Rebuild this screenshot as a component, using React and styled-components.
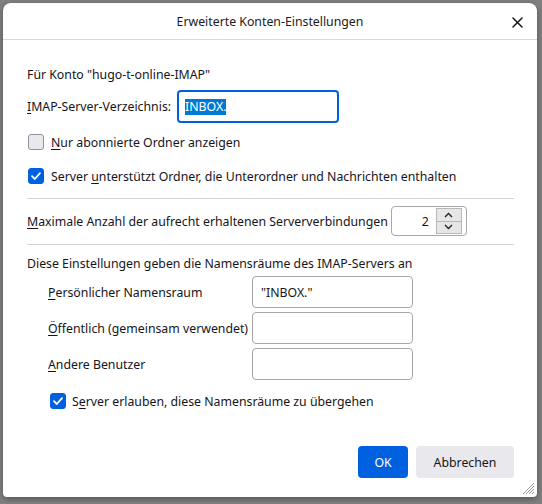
import React from 'react';
import styled, { createGlobalStyle } from 'styled-components';

const GlobalStyle = createGlobalStyle`
  html, body {
    margin: 0;
    padding: 0;
    background: #808080;
    font-family: "Noto Sans", "Open Sans", sans-serif;
  }
  * { box-sizing: border-box; }
`;

const Page = styled.div`
  width: 542px;
  height: 504px;
  padding: 3px 5px 7px 3px;
`;

const Dialog = styled.div`
  position: relative;
  width: 534px;
  height: 494px;
  background: #ffffff;
  border-radius: 8px 8px 4px 4px;
  box-shadow: 0 2px 6px rgba(0, 0, 0, 0.35);
  display: flex;
  flex-direction: column;
  color: #15141a;
  font-size: 12.3px;
`;

const Header = styled.div`
  height: 37px;
  border-bottom: 1px solid #d8d8d8;
  display: flex;
  align-items: center;
  justify-content: center;
  position: relative;
  font-size: 12.3px;
  color: #1b1b1b;
`;

const Close = styled.button`
  position: absolute;
  right: 10px;
  top: 9px;
  width: 20px;
  height: 20px;
  border: 0;
  background: transparent;
  padding: 0;
  display: flex;
  align-items: center;
  justify-content: center;
`;

const Body = styled.div`
  flex: 1;
  padding: 0 23px 0 24px;
  display: flex;
  flex-direction: column;
`;

const Text = styled.div`
  height: 18px;
  line-height: 18px;
  margin-top: ${(p) => p.$mt || 0}px;
  white-space: nowrap;
`;

const Row = styled.div`
  display: flex;
  align-items: center;
  gap: ${(p) => p.$gap || 0}px;
  margin-top: ${(p) => p.$mt || 0}px;
  padding-left: ${(p) => p.$pl || 0}px;
  height: ${(p) => p.$h || 20}px;
  white-space: nowrap;
`;

const Input = styled.div`
  width: ${(p) => p.$w}px;
  height: ${(p) => p.$h || 32}px;
  border: ${(p) => (p.$focus ? '2px solid #0061e0' : '1px solid #a7a7ad')};
  border-radius: 4px;
  display: flex;
  align-items: center;
  padding-left: ${(p) => (p.$focus ? 6 : 8)}px;
`;

const Selected = styled.span`
  background: #0078d7;
  color: #fff;
  line-height: 16px;
`;

const Key = styled.span`
  text-decoration: underline;
  text-underline-offset: 2px;
`;

const Box = styled.span`
  width: 16px;
  height: 16px;
  border-radius: 3px;
  flex: none;
  display: flex;
  align-items: center;
  justify-content: center;
  background: ${(p) => (p.$checked ? '#0061e0' : '#e9e9ed')};
  border: 1px solid ${(p) => (p.$checked ? '#0061e0' : '#8f8f9d')};
`;

const Separator = styled.div`
  height: 1px;
  background: #d4d4d8;
  margin-top: ${(p) => p.$mt || 0}px;
`;

const Spinner = styled.div`
  width: 76px;
  height: 30px;
  border: 1px solid #a7a7ad;
  border-radius: 4px;
  display: flex;
  align-items: center;
  justify-content: flex-end;
  padding: 0 4px 0 0;
  gap: 7px;
`;

const SpinButtons = styled.div`
  width: 26px;
  height: 26px;
  display: flex;
  flex-direction: column;
  border: 1px solid #b8b8b8;
  background: #e6e6e6;
`;

const SpinButton = styled.div`
  flex: 1;
  display: flex;
  align-items: center;
  justify-content: center;
  & + & { border-top: 1px solid #b8b8b8; }
`;

const NsGrid = styled.div`
  display: grid;
  grid-template-columns: 204px 161px;
  row-gap: 4px;
  padding-left: 21px;
  margin-top: 3px;
  align-items: center;
  white-space: nowrap;
`;

const Footer = styled.div`
  display: flex;
  justify-content: flex-end;
  gap: 8px;
  padding: 0 23px 19px 0;
`;

const Button = styled.button`
  height: 32px;
  padding: 0 15px;
  min-width: ${(p) => (p.$primary ? 50 : 98)}px;
  border: 0;
  border-radius: 4px;
  font: inherit;
  font-size: 12.3px;
  background: ${(p) => (p.$primary ? '#0061e0' : '#e9e9ed')};
  color: ${(p) => (p.$primary ? '#ffffff' : '#15141a')};
`;

const Grip = styled.svg`
  position: absolute;
  right: 2px;
  bottom: 2px;
`;

function Check({ checked }) {
  return (
    <Box $checked={checked}>
      {checked && (
        <svg width="12" height="12" viewBox="0 0 12 12">
          <path d="M2 6.2 L4.8 9 L10 3.2" fill="none" stroke="#fff" strokeWidth="1.8" strokeLinecap="round" strokeLinejoin="round" />
        </svg>
      )}
    </Box>
  );
}

export default function App() {
  return (
    <>
      <GlobalStyle />
      <Page>
        <Dialog>
          <Header>
            Erweiterte Konten-Einstellungen
            <Close>
              <svg width="11" height="11" viewBox="0 0 11 11">
                <path d="M1 1 L10 10 M10 1 L1 10" stroke="#15141a" strokeWidth="1.5" strokeLinecap="round" />
              </svg>
            </Close>
          </Header>
          <Body>
            <Text $mt={26}>Für Konto "hugo-t-online-IMAP"</Text>
            <Row $mt={6} $h={33} $gap={6}>
              <span><Key>I</Key>MAP-Server-Verzeichnis:</span>
              <Input $w={162} $h={33} $focus>
                <Selected>INBOX.</Selected>
              </Input>
            </Row>
            <Row $mt={9} $gap={7} $pl={1}>
              <Check />
              <span><Key>N</Key>ur abonnierte Ordner anzeigen</span>
            </Row>
            <Row $mt={14} $gap={7} $pl={1}>
              <Check checked />
              <span>Server <Key>u</Key>nterstützt Ordner, die Unterordner und Nachrichten enthalten</span>
            </Row>
            <Separator $mt={12} />
            <Row $mt={7} $h={30} $gap={3}>
              <span><Key>M</Key>aximale Anzahl der aufrecht erhaltenen Serververbindungen</span>
              <Spinner>
                <span>2</span>
                <SpinButtons>
                  <SpinButton>
                    <svg width="9" height="6" viewBox="0 0 9 6"><path d="M1 5 L4.5 1.5 L8 5" fill="none" stroke="#222" strokeWidth="1.4" /></svg>
                  </SpinButton>
                  <SpinButton>
                    <svg width="9" height="6" viewBox="0 0 9 6"><path d="M1 1 L4.5 4.5 L8 1" fill="none" stroke="#222" strokeWidth="1.4" /></svg>
                  </SpinButton>
                </SpinButtons>
              </Spinner>
            </Row>
            <Separator $mt={8} />
            <Text $mt={10}>Diese Einstellungen geben die Namensräume des IMAP-Servers an</Text>
            <NsGrid>
              <span><Key>P</Key>ersönlicher Namensraum</span>
              <Input $w={161}>"INBOX."</Input>
              <span><Key>Ö</Key>ffentlich (gemeinsam verwendet)</span>
              <Input $w={161} />
              <span><Key>A</Key>ndere Benutzer</span>
              <Input $w={161} />
            </NsGrid>
            <Row $mt={11} $gap={6} $pl={23}>
              <Check checked />
              <span>S<Key>e</Key>rver erlauben, diese Namensräume zu übergehen</span>
            </Row>
          </Body>
          <Footer>
            <Button $primary>OK</Button>
            <Button>Abbrechen</Button>
          </Footer>
          <Grip width="12" height="12" viewBox="0 0 12 12">
            <path d="M11 3 L3 11 M11 6 L6 11 M11 9 L9 11 M11 0 L0 11" stroke="#9a9a9a" strokeWidth="1" />
          </Grip>
        </Dialog>
      </Page>
    </>
  );
}
